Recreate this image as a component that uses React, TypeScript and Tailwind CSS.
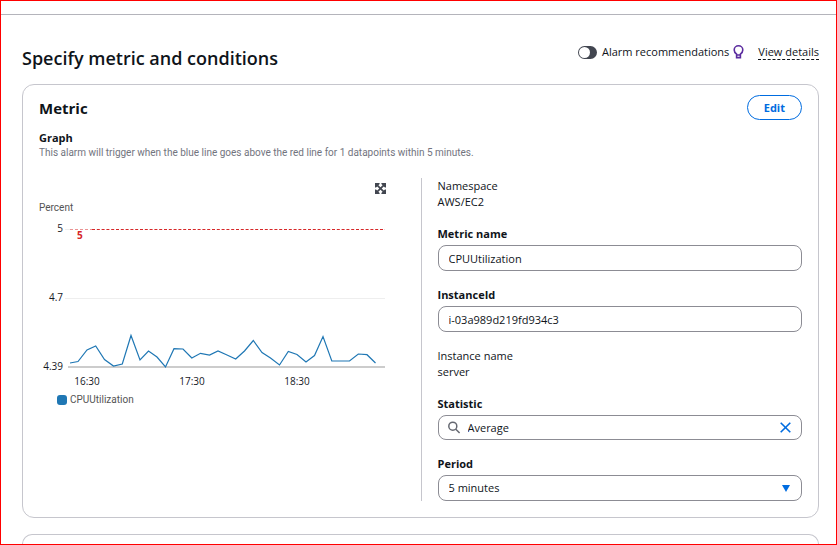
import React, { useState } from "react";

const series: [number, number][] = [
  [31, 163], [39, 161.5], [48, 150], [56.7, 146], [65.5, 159.5], [74.5, 166],
  [83.3, 164], [92, 135.5], [101, 160], [109.5, 151], [118, 157], [126.5, 167],
  [135, 148.7], [144, 149], [152.8, 158], [161.5, 153.3], [170.5, 155], [179, 151],
  [188, 155], [196.7, 159], [205.5, 151], [214.3, 140.5], [223, 152.5], [231.5, 158],
  [240.5, 165], [249.3, 151.5], [258, 154.5], [267, 162], [275.5, 155.5], [284, 136.5],
  [292.8, 161], [310.5, 161], [319.3, 154], [328, 154.7], [336.5, 163],
];

function MetricChart() {
  return (
    <svg
      width="350"
      height="208"
      viewBox="0 0 350 208"
      role="img"
      aria-label="CPUUtilization graph"
      className="block text-[10px]"
    >
      <text x="0" y="11" fill="#545454" className="font-['Roboto',sans-serif]">Percent</text>
      <g fill="#16191f" textAnchor="end">
        <text x="24" y="32">5</text>
        <text x="24" y="101">4.7</text>
        <text x="24" y="170">4.39</text>
      </g>
      <path d="M26 98.5H346" stroke="#eeeeee" />
      <path d="M26 29.5H31" stroke="#eeeeee" />
      <path d="M29 167H346" stroke="#cccccc" strokeWidth="2" />
      <path d="M31 29.5H53" stroke="#d62728" strokeOpacity="0.5" strokeDasharray="3 2" />
      <path d="M53 29.5H346" stroke="#d62728" strokeDasharray="3 1.8" />
      <text x="38" y="39" fill="#d62728" fontWeight="700">5</text>
      <polyline
        points={series.map((p) => p.join(",")).join(" ")}
        fill="none"
        stroke="#1f77b4"
        strokeWidth="1.2"
      />
      <g fill="#16191f" textAnchor="middle">
        <text x="48" y="185">16:30</text>
        <text x="153" y="185">17:30</text>
        <text x="258" y="185">18:30</text>
      </g>
      <rect x="18" y="195" width="10" height="10" rx="3" fill="#1f77b4" />
      <text x="31" y="203" fill="#545454" className="font-['Roboto',sans-serif]">CPUUtilization</text>
    </svg>
  );
}

function ExpandIcon() {
  return (
    <svg width="11" height="11" viewBox="0 0 11 11" aria-hidden="true">
      <path fill="#424650" d="M0 0h4.6v1L3.4 2.2 5.5 4.3l2.1-2.1L6.4 1V0H11v4.6h-1L8.8 3.4 6.7 5.5l2.1 2.1L10 6.4h1V11H6.4v-1l1.2-1.2-2.1-2.1-2.1 2.1L4.6 10v1H0V6.4h1l1.2 1.2 2.1-2.1-2.1-2.1L1 4.6H0z" />
    </svg>
  );
}

const fieldClass =
  "block w-full rounded-lg border border-[#8c8c94] bg-white text-[11px] text-[#0f141a] outline-none";

function Field({ id, label, children }: { id: string; label: string; children: React.ReactNode }) {
  return (
    <div>
      <label htmlFor={id} className="mb-[3px] block font-bold">{label}</label>
      {children}
    </div>
  );
}

function Pair({ name, value }: { name: string; value: string }) {
  return (
    <dl>
      <dt>{name}</dt>
      <dd>{value}</dd>
    </dl>
  );
}

export default function App() {
  const [recommend, setRecommend] = useState(false);
  const [statistic, setStatistic] = useState("Average");

  return (
    <div className="flex min-h-screen flex-col border border-[#ff0000] bg-white font-['Open_Sans','Noto_Sans',sans-serif] text-[11px] leading-4 text-[#0f141a]">
      <div className="h-3.5 border-b border-[#b4b4bb]" />
      <main className="flex flex-1 flex-col gap-4 pr-[17px] pl-[21px] pt-[29px]">
        <div>
          <header className="flex items-start justify-between pb-3">
            <h1 className="text-lg leading-7 font-semibold">Specify metric and conditions</h1>
            <div className="flex items-center">
              <label className="flex items-center gap-[5px]">
                <input
                  type="checkbox"
                  role="switch"
                  checked={recommend}
                  onChange={(e) => setRecommend(e.target.checked)}
                  className="peer sr-only"
                />
                <span className="flex h-[13px] w-[19px] items-center rounded-full bg-[#424650] px-px peer-checked:justify-end">
                  <span className="size-[11px] rounded-full bg-white" />
                </span>
                Alarm recommendations
              </label>
              <svg width="11" height="14" viewBox="0 0 11 14" aria-hidden="true" className="ml-1" fill="none" stroke="#5b2c9f" strokeWidth="1.6">
                <path d="M3.6 9.2C2.2 8 1.2 6.8 1.2 4.9a4.3 4.1 0 0 1 8.6 0c0 1.9-1 3.1-2.4 4.3v3.4H3.6z M3.6 10h3.8" />
              </svg>
              <a href="#details" className="ml-3.5 border-b border-dashed border-[#0f141a] leading-[14px]">View details</a>
            </div>
          </header>

          <section className="rounded-xl border border-[#c6c6cd] p-4 pt-2.5">
            <div className="flex items-center justify-between">
              <h2 className="text-[15px] leading-6 font-bold">Metric</h2>
              <button type="button" className="h-[25px] rounded-full border border-[#006ce0] px-4 text-[11px] font-bold text-[#006ce0]">
                Edit
              </button>
            </div>
            <h3 className="mt-2.5 font-bold">Graph</h3>
            <p className="font-['Roboto',sans-serif] text-[10px] leading-3.5 text-[#72747e]">
              This alarm will trigger when the blue line goes above the red line for 1 datapoints within 5 minutes.
            </p>

            <div className="mt-[18px] grid grid-cols-2">
              <div className="pt-[5px] pr-[35px]">
                <div className="flex justify-end">
                  <button type="button" aria-label="Enlarge graph" className="mb-1.5"><ExpandIcon /></button>
                </div>
                <MetricChart />
              </div>
              <div className="flex flex-col gap-4 border-l border-[#c6c6cd] pl-4">
                <Pair name="Namespace" value="AWS/EC2" />
                <Field id="metric-name" label="Metric name">
                  <input id="metric-name" defaultValue="CPUUtilization" className={`${fieldClass} h-[26px] px-2.5`} />
                </Field>
                <Field id="instance-id" label="InstanceId">
                  <input id="instance-id" defaultValue="i-03a989d219fd934c3" className={`${fieldClass} h-[26px] px-2.5`} />
                </Field>
                <Pair name="Instance name" value="server" />
                <Field id="statistic" label="Statistic">
                  <div className={`${fieldClass} flex h-[25px] items-center pr-2.5 pl-[9px]`}>
                    <svg width="13" height="13" viewBox="0 0 13 13" aria-hidden="true" fill="none" stroke="#656871" strokeWidth="1.5">
                      <circle cx="4.8" cy="5.2" r="4" />
                      <path d="M7.8 8.2l3.8 3.8" />
                    </svg>
                    <input
                      id="statistic"
                      value={statistic}
                      onChange={(e) => setStatistic(e.target.value)}
                      className="ml-[7px] min-w-0 flex-1 outline-none"
                    />
                    <button type="button" aria-label="Clear statistic" onClick={() => setStatistic("")}>
                      <svg width="11" height="11" viewBox="0 0 11 11" aria-hidden="true" stroke="#006ce0" strokeWidth="1.6">
                        <path d="M0.7 0.7l9.6 9.6M10.3 0.7l-9.6 9.6" />
                      </svg>
                    </button>
                  </div>
                </Field>
                <Field id="period" label="Period">
                  <div className="grid items-center">
                    <select id="period" className={`${fieldClass} col-start-1 row-start-1 h-[26px] appearance-none px-2.5`}>
                      <option>5 minutes</option>
                    </select>
                    <svg width="8" height="7" viewBox="0 0 8 7" aria-hidden="true" className="pointer-events-none col-start-1 row-start-1 mr-3 justify-self-end" fill="#006ce0">
                      <path d="M0 0h8L4 7z" />
                    </svg>
                  </div>
                </Field>
              </div>
            </div>
          </section>
        </div>
        <section aria-label="Conditions" className="flex-1 rounded-t-xl border border-b-0 border-[#c6c6cd]" />
      </main>
    </div>
  );
}
